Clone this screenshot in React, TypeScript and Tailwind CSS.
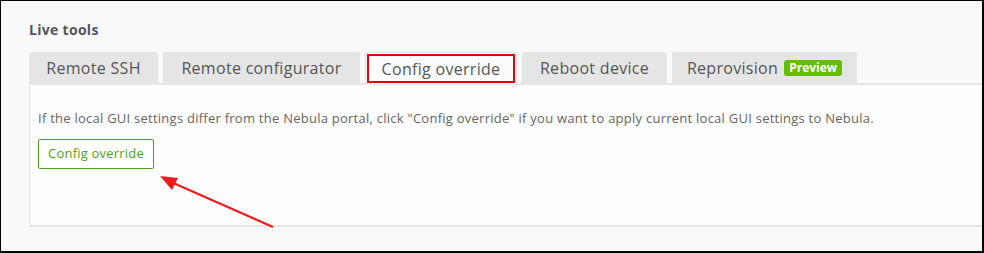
import React from "react";

const tabs = [
  { label: "Remote SSH", w: "w-[129px]" },
  { label: "Remote configurator", w: "w-[197px]" },
];

export default function App() {
  return (
    <div
      className="relative w-[984px] h-[253px] overflow-hidden bg-[#f9f9f9] border-l border-t border-r-2 border-b-2 border-black"
      style={{ fontFamily: '"Open Sans", "Liberation Sans", sans-serif' }}
    >
      <div className="pl-[28px] pt-[18px]">
        <div className="text-[14px] font-bold text-[#555] leading-[21px] tracking-[0.3px]">Live tools</div>
        <div className="mt-[12px] flex items-end gap-[5px] h-[31px]">
          {tabs.map((t) => (
            <div
              key={t.label}
              className={`${t.w} h-[31px] flex items-center justify-center rounded-t-[3px] bg-[#e5e5e5] text-[16px] text-[#555] tracking-[0.3px]`}
            >
              {t.label}
            </div>
          ))}
          <div className="w-[152px] h-[32px] -mb-px p-px rounded-t-[3px] border border-b-0 border-[#e2e2e2] bg-[#fcfcfc] relative z-10">
            <div className="w-full h-full border-2 border-[#e8000b] flex items-center justify-center text-[16px] text-[#555] tracking-[0.3px]">
              Config override
            </div>
          </div>
          <div className="w-[145px] h-[31px] flex items-center justify-center rounded-t-[3px] bg-[#e5e5e5] text-[16px] text-[#555] tracking-[0.3px]">
            Reboot device
          </div>
          <div className="w-[185px] h-[31px] flex items-center justify-center gap-[6px] rounded-t-[3px] bg-[#e5e5e5] text-[16px] text-[#555]">
            <span className="tracking-[0.3px]">Reprovision</span>
            <span className="h-[16px] px-[5px] rounded-[3px] bg-[#64bd00] text-white text-[12px] font-bold leading-[16px]">
              Preview
            </span>
          </div>
        </div>
        <div className="h-[144px] border-t-2 border-b-2 border-l border-[#e6e6e6] bg-[#fdfdfd] pl-[8px] pt-[24px]">
          <p className="text-[13px] text-[#666] leading-[18px] tracking-[0.25px]">
            If the local GUI settings differ from the Nebula portal, click "Config override" if you want to apply current local GUI settings to Nebula.
          </p>
          <button className="mt-[12px] w-[116px] h-[30px] border border-[#4ea21a] rounded-[2px] bg-white text-[13px] text-[#4ea21a] tracking-[0.2px] flex items-center justify-center">
            Config override
          </button>
        </div>
      </div>
      <svg className="absolute left-0 top-0 pointer-events-none" width="984" height="253">
        <line x1="272" y1="226" x2="170" y2="181" stroke="#ee1c1c" strokeWidth="2.2" />
        <polygon points="159,175 177,177 171,189" fill="#ee1c1c" />
      </svg>
    </div>
  );
}
